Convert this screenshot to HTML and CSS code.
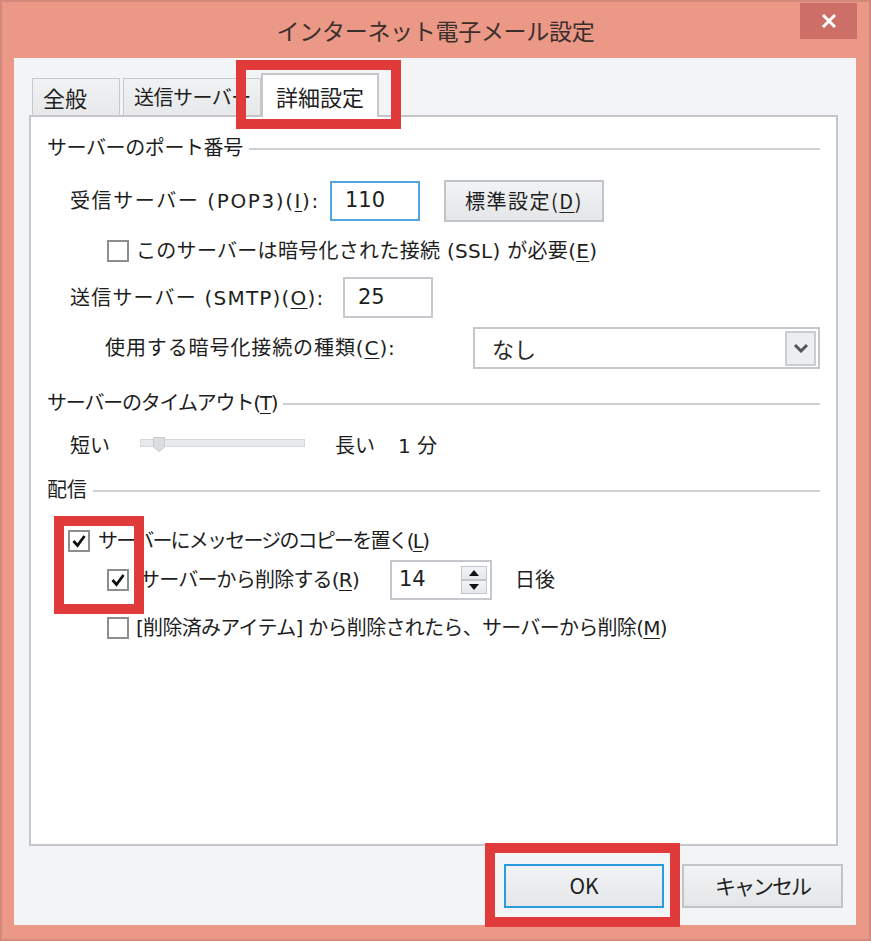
FILE: index.html
```html
<!DOCTYPE html>
<html lang="ja">
<head>
<meta charset="utf-8">
<title>インターネット電子メール設定</title>
<link rel="stylesheet" href="styles.css">
</head>
<body>
<div class="window">
  <div class="titlebar">
    <div class="title">インターネット電子メール設定</div>
    <div class="close">
      <svg width="16" height="16" viewBox="0 0 16 16"><path d="M2 2 L14 14 M14 2 L2 14" stroke="#fff" stroke-width="3" fill="none"/></svg>
    </div>
  </div>
  <div class="client">
    <div class="tabs">
      <div class="tab tab-general">全般</div>
      <div class="tab tab-send">送信サーバー</div>
      <div class="tab tab-active">詳細設定</div>
    </div>
    <div class="panel">
      <div class="group"><span class="g-port">サーバーのポート番号</span><div class="rule"></div></div>

      <div class="row row-pop">
        <span class="label label-pop">受信サーバー (POP3)(<u>I</u>):</span>
        <div class="input input-focus">110</div>
        <div class="btn btn-default">標準設定(<u>D</u>)</div>
      </div>

      <div class="row row-ssl">
        <span class="cb"></span>
        <span class="t-ssl">このサーバーは暗号化された接続 (SSL) が必要(<u>E</u>)</span>
      </div>

      <div class="row row-smtp">
        <span class="label label-smtp">送信サーバー (SMTP)(<u>O</u>):</span>
        <div class="input">25</div>
      </div>

      <div class="row row-enc">
        <span class="label label-enc">使用する暗号化接続の種類(<u>C</u>):</span>
        <div class="select">
          <span class="select-value">なし</span>
          <span class="select-arrow">
            <svg width="16" height="10" viewBox="0 0 16 10"><path d="M2 2 L8 8 L14 2" stroke="#555" stroke-width="3" fill="none"/></svg>
          </span>
        </div>
      </div>

      <div class="group group-timeout"><span class="g-timeout">サーバーのタイムアウト(<u>T</u>)</span><div class="rule"></div></div>

      <div class="row row-slider">
        <span class="short">短い</span>
        <div class="track">
          <svg class="thumb" width="12" height="15" viewBox="0 0 12 15"><path d="M0.5 0.5 H11.5 V10 L6 14.5 L0.5 10 Z" fill="#dcdde0" stroke="#c9cacd"/></svg>
        </div>
        <span class="long">長い</span>
        <span class="minutes">1 分</span>
      </div>

      <div class="group group-delivery"><span>配信</span><div class="rule"></div></div>

      <div class="row row-c1">
        <span class="cb checked"><svg width="18" height="18" viewBox="0 0 18 18"><path d="M3.5 9 L7.5 13.5 L14.5 4" stroke="#111" stroke-width="2.8" fill="none"/></svg></span>
        <span class="t-c1">サーバーにメッセージのコピーを置く(<u>L</u>)</span>
      </div>

      <div class="row row-c2">
        <span class="cb checked"><svg width="18" height="18" viewBox="0 0 18 18"><path d="M3.5 9 L7.5 13.5 L14.5 4" stroke="#111" stroke-width="2.8" fill="none"/></svg></span>
        <span class="label label-del">サーバーから削除する(<u>R</u>)</span>
        <div class="spin">
          <span class="spin-value">14</span>
          <div class="spin-btns">
            <span class="spin-btn"><svg width="10" height="6" viewBox="0 0 10 6"><path d="M0 6 L5 0 L10 6 Z" fill="#111"/></svg></span>
            <span class="spin-btn"><svg width="10" height="6" viewBox="0 0 10 6"><path d="M0 0 L5 6 L10 0 Z" fill="#111"/></svg></span>
          </div>
        </div>
        <span class="days">日後</span>
      </div>

      <div class="row row-c3">
        <span class="cb"></span>
        <span class="t-c3">[削除済みアイテム] から削除されたら、サーバーから削除(<u>M</u>)</span>
      </div>
    </div>
    <div class="buttons">
      <div class="btn btn-ok">OK</div>
      <div class="btn btn-cancel">キャンセル</div>
    </div>
  </div>

  <div class="mark mark-tab"></div>
  <div class="mark mark-check"></div>
  <div class="mark mark-ok"></div>
</div>
</body>
</html>
```

FILE: styles.css
```css
* { box-sizing: border-box; }
html, body { margin: 0; padding: 0; }
body {
  width: 871px;
  height: 941px;
  overflow: hidden;
  background: #eb9886;
  font-family: "DejaVu Sans", "Noto Sans CJK JP", sans-serif;
  font-size: 20px;
  line-height: 1.2;
  color: #1e1e1e;
}
u { text-underline-offset: 3px; text-decoration-thickness: 1px; }

.window {
  position: relative;
  width: 871px;
  height: 941px;
  background: #eb9886;
  border: 2px solid #d2887a;
  display: flex;
  flex-direction: column;
}

.titlebar {
  height: 56px;
  display: grid;
  grid-template-columns: 1fr auto 1fr;
}
.title {
  grid-column: 2;
  align-self: center;
  font-family: "Noto Sans CJK JP", sans-serif;
  font-size: 23px;
  color: #3a2f2d;
  margin-top: 2px;
  letter-spacing: -0.3px;
}
.close {
  grid-column: 3;
  justify-self: end;
  align-self: start;
  margin-top: 1px;
  margin-right: 12px;
  width: 57px;
  height: 36px;
  background: #cd6f67;
  display: flex;
  align-items: center;
  justify-content: center;
}

.client {
  flex: 1;
  margin: 0 13px 14px 12px;
  background: #f3f4f6;
  padding: 15px 18px 17px 15px;
  display: flex;
  flex-direction: column;
}

.tabs {
  height: 42px;
  display: flex;
  align-items: flex-end;
  padding-left: 3px;
}
.tab {
  height: 37px;
  border: 1px solid #c6c8cc;
  border-bottom: none;
  background: linear-gradient(#f1f2f3, #e7e8ea);
  font-family: "Noto Sans CJK JP", sans-serif;
  font-size: 22px;
  display: flex;
  align-items: center;
  padding-left: 10px;
  white-space: nowrap;
}
.tab-general { width: 88px; }
.tab-send { width: 138px; margin-left: 3px; font-size: 20px; letter-spacing: -0.5px; }
.tab-active {
  width: 118px;
  height: 44px;
  margin-bottom: -2px;
  padding-left: 0;
  justify-content: center;
  background: #fff;
  border: 2px solid #c4c6ca;
  border-bottom: none;
  position: relative;
  z-index: 2;
}

.panel {
  flex: 1;
  background: #fff;
  border: 2px solid #c4c6ca;
  padding: 16px 16px 0 16px;
  display: flex;
  flex-direction: column;
}

.group {
  height: 30px;
  display: flex;
  align-items: center;
  gap: 6px;
  white-space: nowrap;
}
.g-port { letter-spacing: -0.4px; }
.g-timeout { letter-spacing: -1.2px; }
.rule {
  flex: 1;
  height: 2px;
  background: #cdd0d3;
  margin-top: 2px;
}
.group-timeout { margin-top: 19px; }
.group-delivery { margin-top: 17px; }

.row {
  display: flex;
  align-items: center;
  white-space: nowrap;
}
.label { display: inline-block; }

.row-pop { margin-top: 17px; height: 42px; padding-left: 23px; }
.label-pop { width: 260px; letter-spacing: 1.6px; }
.input {
  width: 90px;
  height: 40px;
  border: 2px solid #c5c8cc;
  background: #fff;
  font-size: 21px;
  display: flex;
  align-items: center;
  padding-left: 13px;
}
.input-focus { border-color: #51a6e2; }

.btn {
  height: 44px;
  border: 2px solid #c1c4c8;
  background: linear-gradient(#f2f3f4, #e5e6e8);
  display: flex;
  align-items: center;
  justify-content: center;
  font-family: "Noto Sans CJK JP", sans-serif;
}
.btn-default { width: 160px; height: 42px; margin-left: 24px; letter-spacing: 1.5px; }

.row-ssl { margin-top: 17px; height: 24px; padding-left: 60px; gap: 7px; }
.t-ssl { letter-spacing: 0.3px; }
.cb {
  width: 22px;
  height: 22px;
  border: 2px solid #8e8e8e;
  background: #fff;
  display: flex;
  align-items: center;
  justify-content: center;
  flex: none;
}

.row-smtp { margin-top: 14px; height: 41px; padding-left: 23px; }
.label-smtp { width: 273px; letter-spacing: 1.2px; }
.row-smtp .input { height: 41px; }

.row-enc { margin-top: 9px; height: 42px; padding-left: 58px; }
.label-enc { width: 369px; letter-spacing: 0.9px; }
.select {
  width: 348px;
  height: 42px;
  border: 2px solid #c5c8cc;
  background: #fff;
  display: flex;
  align-items: center;
  justify-content: space-between;
  padding: 0 2px 0 17px;
}
.select-value { font-family: "Noto Sans CJK JP", sans-serif; font-size: 22px; color: #2a2a2a; }
.select-arrow {
  width: 31px;
  height: 35px;
  border: 2px solid #c9ccd0;
  background: #eceef0;
  display: flex;
  align-items: center;
  justify-content: center;
}

.row-slider { margin-top: 16px; height: 24px; padding-left: 23px; }
.short { width: 70px; }
.track {
  position: relative;
  width: 165px;
  height: 8px;
  background: #e8e9eb;
  border: 1px solid #d6d8db;
  margin-top: -6px;
}
.thumb { position: absolute; left: 12px; top: -3px; }
.long { margin-left: 30px; }
.minutes { margin-left: 23px; }

.row-c1 { margin-top: 24px; height: 24px; padding-left: 21px; gap: 8px; }
.t-c1 { letter-spacing: -1.8px; }
.row-c2 { margin-top: 7px; height: 40px; padding-left: 60px; gap: 11px; }
.label-del { width: 239px; letter-spacing: -0.8px; }
.spin {
  width: 102px;
  height: 40px;
  border: 2px solid #c5c8cc;
  background: #fff;
  display: flex;
  align-items: center;
  justify-content: space-between;
  padding: 0 3px 0 7px;
}
.spin-value { font-size: 21px; }
.spin-btns {
  width: 26px;
  height: 28px;
  display: flex;
  flex-direction: column;
}
.spin-btn {
  flex: 1;
  border: 1px solid #c3c6ca;
  background: linear-gradient(#f3f4f5, #e6e7e9);
  display: flex;
  align-items: center;
  justify-content: center;
}
.days { margin-left: 12px; }
.row-c3 { margin-top: 16px; height: 24px; padding-left: 60px; gap: 7px; }
.t-c3 { letter-spacing: -0.7px; }

.buttons {
  display: flex;
  justify-content: flex-end;
  gap: 18px;
  margin-top: 18px;
  margin-right: -5px;
}
.btn-ok { width: 160px; border-color: #2a9be0; font-size: 21px; }
.btn-cancel { width: 161px; font-size: 21px; letter-spacing: -2px; }

.mark {
  position: absolute;
  border: 10px solid #e03a3b;
  pointer-events: none;
}
.mark-tab { left: 234px; top: 58px; width: 165px; height: 69px; }
.mark-check { left: 52px; top: 514px; width: 90px; height: 98px; }
.mark-ok { left: 483px; top: 841px; width: 195px; height: 84px; }
```
